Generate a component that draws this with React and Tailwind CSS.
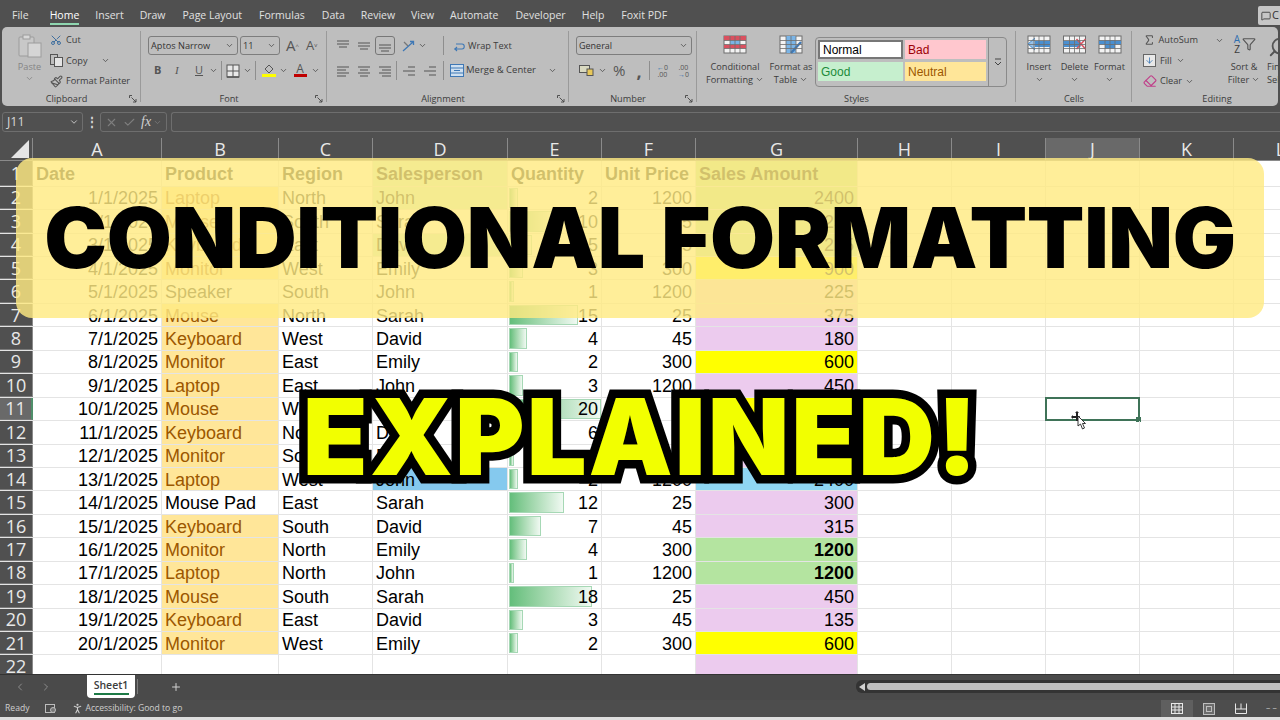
import { ChevronDown, ChevronLeft, ChevronRight, Plus, Scissors, Paintbrush, Sigma, Funnel, Search, X, Check, Eraser, PersonStanding, MessageSquare, ArrowDown } from 'lucide-react'

const COLS = ['A', 'B', 'C', 'D', 'E', 'F', 'G', 'H', 'I', 'J', 'K', 'L']
const WIDTHS = ['w-[129px]', 'w-[117px]', 'w-[94px]', 'w-[135px]', 'w-[94px]', 'w-[94px]', 'w-[162px]', 'w-[94px]', 'w-[94px]', 'w-[94px]', 'w-[94px]', 'w-[94px]']

const ROWS = [
  ['1/1/2025', 'Laptop', 'North', 'John', 2, 1200, 2400],
  ['2/1/2025', 'Mouse', 'South', 'Sarah', 10, 25, 250],
  ['3/1/2025', 'Keyboard', 'East', 'David', 5, 45, 225],
  ['4/1/2025', 'Monitor', 'West', 'Emily', 3, 300, 900],
  ['5/1/2025', 'Speaker', 'South', 'John', 1, 1200, 225],
  ['6/1/2025', 'Mouse', 'North', 'Sarah', 15, 25, 375],
  ['7/1/2025', 'Keyboard', 'West', 'David', 4, 45, 180],
  ['8/1/2025', 'Monitor', 'East', 'Emily', 2, 300, 600],
  ['9/1/2025', 'Laptop', 'East', 'John', 3, 1200, 450],
  ['10/1/2025', 'Mouse', 'West', 'Sarah', 20, 25, 500],
  ['11/1/2025', 'Keyboard', 'North', 'David', 6, 45, 270],
  ['12/1/2025', 'Monitor', 'South', 'Emily', 1, 300, 300],
  ['13/1/2025', 'Laptop', 'West', 'John', 2, 1200, 2400],
  ['14/1/2025', 'Mouse Pad', 'East', 'Sarah', 12, 25, 300],
  ['15/1/2025', 'Keyboard', 'South', 'David', 7, 45, 315],
  ['16/1/2025', 'Monitor', 'North', 'Emily', 4, 300, 1200],
  ['17/1/2025', 'Laptop', 'North', 'John', 1, 1200, 1200],
  ['18/1/2025', 'Mouse', 'South', 'Sarah', 18, 25, 450],
  ['19/1/2025', 'Keyboard', 'East', 'David', 3, 45, 135],
  ['20/1/2025', 'Monitor', 'West', 'Emily', 2, 300, 600],
]

const GREEN_SALES = [2, 3, 4, 17, 18]
const YELLOW_SALES = [5, 9, 11, 21]
const GREEN_PEOPLE = [2, 4]

function salesFill(n) {
  if (n === 14) return 'bg-[#8fd6f3]'
  if (YELLOW_SALES.includes(n)) return 'bg-[#ffff00]'
  if (GREEN_SALES.includes(n)) return 'bg-[#b4e4a0]'
  return 'bg-[#eccbee]'
}

function Chev({ className = '' }) {
  return <ChevronDown size={9} strokeWidth={2} className={`shrink-0 text-[#444] ${className}`} />
}

function Launcher() {
  return (
    <svg width="8" height="8" viewBox="0 0 8 8" className="absolute right-[4px] bottom-[3px] text-[#444]" fill="none" stroke="currentColor">
      <path d="M0.5 3V0.5H3M2.5 2.5L7 7M7 4V7H4" strokeWidth="0.9" />
    </svg>
  )
}

function Group({ w, label, launcher, children }) {
  return (
    <div className={`${w} shrink-0 flex flex-col relative`}>
      <div className="flex-1 min-h-0 flex">{children}</div>
      <div className={`h-[15px] text-center text-[9.2px] leading-[15px] text-[#3c3c3c] ${launcher ? 'pr-[10px]' : ''}`}>{label}</div>
      {launcher && <Launcher />}
      <div className="absolute right-0 top-[4px] bottom-[4px] w-px bg-[#9a9a9a]" />
    </div>
  )
}

function Sep({ className = '' }) {
  return <div className={`w-px h-[19px] bg-[#8e8e8e] shrink-0 ${className}`} />
}

function Select({ w, text, small }) {
  return (
    <div className={`${w} h-[19px] border border-[#7d7d7d] rounded-[3px] flex items-center justify-between pl-[2px] pr-[3px] shrink-0 ${small ? 'text-[9px]' : 'text-[9.2px]'} text-[#333]`}>
      <span>{text}</span>
      <Chev />
    </div>
  )
}

function Lines({ pattern, className = '' }) {
  return (
    <svg width="14" height="12" viewBox="0 0 14 12" className={`shrink-0 ${className}`} stroke="#555" strokeWidth="1.2">
      {pattern.map(([y, a, b], i) => <line key={i} x1={a} x2={b} y1={y} y2={y} />)}
    </svg>
  )
}

function GridIcon({ children, w = 24, h = 19 }) {
  return (
    <svg width={w} height={h} viewBox="0 0 24 19" className="shrink-0">
      <rect x="1" y="1" width="22" height="17" fill="#f3f3f3" stroke="#6d6d6d" />
      {children}
      <path d="M1 5.5H23M1 9.5H23M1 13.5H23M7 1V18M12 1V18M17 1V18" stroke="#6d6d6d" strokeWidth="0.8" fill="none" />
    </svg>
  )
}

function BigButton({ w, lines, icon, chevBelow }) {
  return (
    <div className={`${w} shrink-0 flex flex-col items-center pt-[8px] text-[9.2px] leading-[13px] text-[#3c3c3c]`}>
      <div className="h-[25px] flex items-start justify-center">{icon}</div>
      {lines.map((l, i) => (
        <div key={l} className="flex items-center gap-[2px] whitespace-nowrap">
          {l}
          {!chevBelow && i === lines.length - 1 && <Chev />}
        </div>
      ))}
      {chevBelow && <Chev className="mt-[2px]" />}
    </div>
  )
}

function StyleCell({ text, className }) {
  return <div className={`h-[19px] flex items-center pl-[3px] text-[12px] [font-family:'Liberation_Sans',Arial,sans-serif] ${className}`}>{text}</div>
}

function Ribbon() {
  return (
    <div className="mx-[2px] h-[79px] shrink-0 bg-[#bebebe] rounded-[5px] flex text-[#3c3c3c] overflow-hidden">
      <Group w="w-[139px]" label="Clipboard" launcher>
        <div className="w-[45px] flex flex-col items-center pl-[10px] pt-[7px] shrink-0">
          <svg width="24" height="24" viewBox="0 0 24 24" fill="none">
            <rect x="1" y="3" width="15" height="19" rx="1" fill="#c8c8c8" stroke="#9c9c9c" />
            <rect x="5" y="1" width="7" height="4" fill="#d8d8d8" stroke="#9c9c9c" />
            <rect x="10" y="9" width="13" height="14" fill="#d5d5d5" stroke="#9c9c9c" />
          </svg>
          <span className="text-[9.2px] leading-[13px] mt-[2px] text-[#858585]">Paste</span>
          <Chev className="opacity-50 mt-[1px]" />
        </div>
        <div className="flex flex-col pl-[3px] pt-[6px] text-[9.2px] gap-[6.5px]">
          <div className="h-[14px] flex items-center gap-[4px]"><Scissors size={12} className="text-[#3f6f9f] -rotate-90" />Cut</div>
          <div className="h-[14px] flex items-center gap-[3px]">
            <svg width="13" height="13" viewBox="0 0 13 13" fill="none" stroke="#555"><rect x="0.5" y="0.5" width="7" height="10" /><rect x="4.5" y="3.5" width="8" height="9" fill="#e4e4e4" /></svg>
            Copy<Chev className="ml-[10px]" />
          </div>
          <div className="h-[14px] flex items-center gap-[3px] whitespace-nowrap"><Paintbrush size={13} className="text-[#555]" />Format Painter</div>
        </div>
      </Group>

      <Group w="w-[186px]" label="Font" launcher>
        <div className="flex flex-col pl-[7px] pt-[9px] gap-[6px]">
          <div className="flex items-center gap-[2px]">
            <Select w="w-[90px]" text="Aptos Narrow" />
            <Select w="w-[40px]" text="11" />
            <span className="ml-[4px] text-[15px] leading-none text-[#555]">A<sup className="text-[6px]">^</sup></span>
            <span className="ml-[5px] text-[13px] leading-none text-[#555]">A<sup className="text-[6px]">v</sup></span>
          </div>
          <div className="flex items-center h-[19px] text-[11px] text-[#555]">
            <span className="ml-[6px] w-[21px] font-bold">B</span>
            <span className="w-[20px] italic [font-family:'Liberation_Serif',serif]">I</span>
            <span className="w-[14px] underline">U</span>
            <Chev className="mr-[3px]" />
            <Sep className="mr-[4px]" />
            <svg width="14" height="14" viewBox="0 0 14 14" fill="#e8e8e8" stroke="#555"><rect x="1" y="1" width="12" height="12" /><path d="M7 1V13M1 7H13" /><path d="M1 13H13" strokeWidth="1.6" /></svg>
            <Chev className="ml-[3px] mr-[3px]" />
            <Sep className="mr-[5px]" />
            <div className="w-[15px] flex flex-col items-center">
              <svg width="12" height="10" viewBox="0 0 12 10" fill="none" stroke="#555"><path d="M2 5L6 1L10 5L6 9Z" /></svg>
              <div className="w-[14px] h-[3px] bg-[#ffff00]" />
            </div>
            <Chev className="ml-[3px] mr-[5px]" />
            <div className="w-[14px] flex flex-col items-center leading-[10px] text-[12px]">A<div className="w-[13px] h-[3px] bg-[#c00000]" /></div>
            <Chev className="ml-[4px]" />
          </div>
        </div>
      </Group>

      <Group w="w-[242px]" label="Alignment" launcher>
        <div className="flex flex-col pt-[9px] gap-[6px] pl-[9px]">
          <div className="flex items-center h-[19px]">
            <Lines pattern={[[1, 1, 13], [4, 1, 13], [7, 3, 11]]} className="mr-[7px]" />
            <Lines pattern={[[3, 1, 13], [6, 1, 13], [9, 3, 11]]} className="mr-[4px]" />
            <div className="w-[20px] h-[19px] border border-[#777] rounded-[3px] flex items-center justify-center mr-[1px]">
              <Lines pattern={[[5, 1, 13], [8, 1, 13], [11, 3, 11]]} />
            </div>
            <svg width="15" height="14" viewBox="0 0 15 14" className="ml-[5px]" fill="none" stroke="#3f78b5" strokeWidth="1.3"><path d="M2 12L12 3M9 2.5H12.5V6" /><path d="M3 3L7 7" stroke="#777" /></svg>
            <Chev className="ml-[2px]" />
            <Sep className="ml-[16px] mr-[8px]" />
            <svg width="14" height="14" viewBox="0 0 14 14" fill="none" stroke="#3f78b5" strokeWidth="1.1"><path d="M2 10H10C13 10 13 5 10 5H4M5 12L3 10L5 8" /></svg>
            <span className="ml-[2px] text-[9.2px]">Wrap Text</span>
          </div>
          <div className="flex items-center h-[19px]">
            <Lines pattern={[[2, 1, 13], [5, 1, 10], [8, 1, 13], [11, 1, 10]]} className="mr-[7px]" />
            <Lines pattern={[[2, 1, 13], [5, 3, 11], [8, 1, 13], [11, 3, 11]]} className="mr-[7px]" />
            <Lines pattern={[[2, 1, 13], [5, 4, 13], [8, 1, 13], [11, 4, 13]]} className="mr-[4px]" />
            <Sep className="mr-[5px]" />
            <Lines pattern={[[2, 6, 13], [6, 1, 13], [10, 6, 13]]} className="mr-[7px]" />
            <Lines pattern={[[2, 6, 13], [6, 1, 13], [10, 6, 13]]} />
            <Sep className="ml-[6px] mr-[6px]" />
            <svg width="14" height="13" viewBox="0 0 14 13" fill="#cfe0f0" stroke="#3f78b5"><rect x="0.5" y="0.5" width="13" height="12" /><path d="M0.5 4H13.5M0.5 9H13.5M4 6.5H10" /></svg>
            <span className="ml-[2px] text-[9.5px] whitespace-nowrap">Merge &amp; Center</span>
            <Chev className="ml-[12px]" />
          </div>
        </div>
      </Group>

      <Group w="w-[128px]" label="Number" launcher>
        <div className="flex flex-col pl-[7px] pt-[9px] gap-[6px]">
          <Select w="w-[116px]" text="General" small />
          <div className="flex items-center h-[19px] text-[#555]">
            <svg width="15" height="11" viewBox="0 0 15 11" className="ml-[3px]" fill="#d9d9c0" stroke="#555"><rect x="0.5" y="0.5" width="10" height="7" /><rect x="8" y="4" width="6" height="6.5" fill="#e8c85a" /></svg>
            <Chev className="ml-[4px]" />
            <span className="ml-[6px] text-[15px] leading-none">%</span>
            <span className="ml-[11px] w-[6px] text-[18px] leading-[10px] font-bold">,</span>
            <Sep className="ml-[7px] mr-[5px]" />
            <span className="w-[14px] text-[7px] leading-[7px] text-center"><span className="text-[#2f6fb0]">←</span>0<br />.00</span>
            <span className="ml-[7px] w-[14px] text-[7px] leading-[7px] text-center">.00<br /><span className="text-[#2f6fb0]">→</span>0</span>
          </div>
        </div>
      </Group>

      <Group w="w-[319px]" label="Styles">
        <BigButton w="w-[62px] ml-[7px]" lines={['Conditional', 'Formatting']} icon={
          <GridIcon>
            <rect x="1" y="1" width="22" height="4.5" fill="#d9505f" />
            <rect x="1" y="9.5" width="22" height="4" fill="#d9505f" />
            <rect x="7" y="5.5" width="10" height="4" fill="#7ab4e6" />
          </GridIcon>
        } />
        <BigButton w="w-[50px]" lines={['Format as', 'Table']} icon={
          <GridIcon>
            <rect x="7" y="1" width="10" height="17" fill="#7ab4e6" />
            <path d="M12 18L22 7" stroke="#3f78b5" strokeWidth="2.4" />
          </GridIcon>
        } />
        <div className="ml-[-1px] mt-[10px] w-[192px] h-[50px] border border-[#8a8a8a] rounded-[4px] flex p-[2px] shrink-0">
          <div className="w-[85px] flex flex-col gap-[3px]">
            <StyleCell text="Normal" className="bg-white border-2 border-[#777] text-black" />
            <StyleCell text="Good" className="bg-[#c6efce] text-[#1c8a3a]" />
          </div>
          <div className="w-[81px] ml-[2px] flex flex-col gap-[3px]">
            <StyleCell text="Bad" className="bg-[#ffc7ce] text-[#9c0006]" />
            <StyleCell text="Neutral" className="bg-[#ffe699] text-[#9c5700]" />
          </div>
          <div className="ml-[2px] -my-[2px] -mr-[2px] flex-1 border-l border-[#8a8a8a] flex items-center justify-center text-[9px]">
            <svg width="8" height="8" viewBox="0 0 8 8" fill="none" stroke="#444"><path d="M1 1H7M1 4L4 7L7 4" /></svg>
          </div>
        </div>
      </Group>

      <Group w="w-[116px]" label="Cells">
        <BigButton w="w-[36px] ml-[5px]" chevBelow lines={['Insert']} icon={
          <GridIcon w={26}>
            <rect x="4" y="6" width="19" height="6" fill="#4a8fd0" />
            <path d="M8 3L1 9L8 15" fill="#9ac3e8" stroke="#4a8fd0" />
          </GridIcon>
        } />
        <BigButton w="w-[35px]" chevBelow lines={['Delete']} icon={
          <GridIcon w={25}>
            <rect x="1" y="6" width="17" height="6" fill="#4a8fd0" />
            <path d="M14 4L23 14M23 4L14 14" stroke="#d9505f" strokeWidth="1.5" />
          </GridIcon>
        } />
        <BigButton w="w-[35px]" chevBelow lines={['Format']} icon={
          <GridIcon w={24}>
            <rect x="7" y="5.5" width="10" height="8" fill="#4a8fd0" />
            <rect x="1" y="5.5" width="22" height="4" fill="#4a8fd0" />
          </GridIcon>
        } />
      </Group>

      <div className="flex-1 flex flex-col relative min-w-0">
        <div className="flex-1 min-h-0 flex overflow-hidden">
          <div className="w-[92px] shrink-0 flex flex-col pl-[11px] pt-[6px] gap-[6.5px] text-[9.2px]">
            <div className="h-[14px] flex items-center gap-[3px]"><Sigma size={14} className="text-[#555]" />AutoSum<Chev className="ml-[14px]" /></div>
            <div className="h-[14px] flex items-center gap-[4px]">
              <div className="w-[13px] h-[13px] border border-[#666] bg-[#e8e8e8] flex items-center justify-center"><ArrowDown size={9} className="text-[#2f6fb0]" /></div>
              Fill<Chev />
            </div>
            <div className="h-[14px] flex items-center gap-[3px]"><Eraser size={14} className="text-[#c0408a]" />Clear<Chev /></div>
          </div>
          <div className="w-[40px] shrink-0 flex flex-col items-center pt-[7px] text-[9.2px] leading-[13px]">
            <div className="h-[26px] flex items-start">
              <span className="text-[10px] leading-[10px] text-center w-[10px]"><span className="text-[#2f6fb0]">A</span><br />Z</span>
              <Funnel size={14} className="mt-[3px] text-[#555]" />
            </div>
            <div>Sort &amp;</div>
            <div className="flex items-center gap-[2px]">Filter<Chev /></div>
          </div>
          <div className="w-[40px] shrink-0 flex flex-col pl-[3px] pt-[7px] text-[9.2px] leading-[13px] whitespace-nowrap">
            <Search size={22} className="h-[26px] -scale-x-100 ml-[1px] text-[#555]" />
            <div>Find &amp;</div>
            <div>Select</div>
          </div>
        </div>
        <div className="h-[15px] pl-[24px] w-[146px] text-center text-[9.2px] leading-[15px]">Editing</div>
      </div>
    </div>
  )
}

function FormulaBar() {
  return (
    <div className="mt-[6px] h-[20px] shrink-0 flex items-stretch text-[#d8d8d8]">
      <div className="ml-[2px] w-[81px] border border-[#6e6e6e] rounded-[3px] flex items-center justify-between pl-[4px] pr-[3px] text-[12.5px]">
        J11<ChevronDown size={10} />
      </div>
      <div className="w-[17px] flex items-center justify-center text-[12px] leading-none font-bold">⋮</div>
      <div className="w-[67px] border border-[#6e6e6e] rounded-[3px] flex items-center pl-[4px] gap-[5px] text-[#7e7e7e]">
        <X size={13} />
        <Check size={13} />
        <span className="italic text-[14px] leading-none text-[#cfcfcf] [font-family:'Liberation_Serif',serif]">fx</span>
        <ChevronDown size={9} className="-ml-[3px]" />
      </div>
      <div className="ml-[4px] flex-1 border border-[#6e6e6e] border-r-0 rounded-l-[3px]" />
    </div>
  )
}

function ColumnHeaders() {
  return (
    <div className="mt-[6px] h-[23px] shrink-0 flex text-[18px] leading-[23px] text-[#e8e8e8] [font-family:'Open_Sans',sans-serif] border-b border-[#8a8a8a]">
      <div className="w-[33px] shrink-0 flex items-end justify-end pr-[3px] pb-[2px] border-r border-[#8a8a8a]">
        <svg width="18" height="18" viewBox="0 0 18 18"><path d="M18 0V18H0Z" fill="#e4e4e4" /></svg>
      </div>
      {COLS.map((c, i) => (
        <div key={c} className={`${WIDTHS[i]} shrink-0 text-center border-r border-[#8a8a8a] ${c === 'J' ? 'bg-[#696969]' : ''}`}>{c}</div>
      ))}
    </div>
  )
}

function DataBar({ value }) {
  return (
    <div
      className="absolute left-[1px] top-[1px] bottom-[1px] border border-[#a6d8b5] bg-gradient-to-r from-[#63be7b] to-[#f0f9f2]"
      style={{ width: value * 4.6 }}
    />
  )
}

function Selection() {
  return (
    <>
      <div className="absolute -left-[1px] -top-[1px] -right-[1px] -bottom-[1px] border-2 border-[#3f7358]" />
      <div className="absolute -right-[2px] -bottom-[2px] w-[5px] h-[5px] bg-[#3f7358]" />
      <svg width="18" height="20" viewBox="0 0 18 20" className="absolute left-[25px] top-[13px]">
        <path d="M6 0L8 2H7V5H8.500L9 6V10H5V7H2V8L0 6L2 4V5H5V2H4Z" fill="#222" />
        <path d="M7 5L7 15L9.500 13L11.500 18L13.500 17L11.500 12.500L14.500 12.500Z" fill="#fff" stroke="#222" strokeWidth="0.9" />
      </svg>
    </>
  )
}

function GridRow({ n, cells, header }) {
  const base = 'shrink-0 h-full flex items-center border-r border-[#e4e4e4] px-[3px] pt-[1px] relative whitespace-nowrap'
  const active = n === 11
  return (
    <div className={`flex shrink-0 border-b border-[#e4e4e4] ${n === 1 ? 'h-[25.7px]' : 'h-[23.45px]'}`}>
      <div className={`w-[33px] shrink-0 h-full flex items-center justify-center text-[18px] text-[#e8e8e8] [font-family:'Open_Sans',sans-serif] border-b border-[#7a7a7a] -mb-px ${active ? 'bg-[#696969] border-r-2 border-r-[#4f8f6a]' : 'bg-[#505050] border-r border-r-[#8a8a8a]'}`}>{n}</div>
      {COLS.map((c, i) => {
        const v = cells ? cells[i] : undefined
        if (header) {
          return <div key={c} className={`${WIDTHS[i]} ${base} font-bold overflow-hidden ${c === 'D' ? 'bg-[#c6efce]' : ''} ${c === 'G' ? 'bg-[#b4e4a0]' : ''}`}>{v}</div>
        }
        let cls = ''
        let content = <span className="relative">{v}</span>
        if (c === 'A' || c === 'E' || c === 'F' || c === 'G') cls = 'justify-end'
        if (c === 'B' && v && v !== 'Mouse Pad' && v !== 'Speaker') cls = 'bg-[#ffe699] text-[#9c5700]'
        if (c === 'D' && GREEN_PEOPLE.includes(n)) cls = 'bg-[#c6efce]'
        if (c === 'D' && n === 14) cls = 'bg-[#85c9ee]'
        if (c === 'G' && n !== 1) cls = `justify-end ${salesFill(n)}`
        if (c === 'G' && v === 1200) content = <span className="font-bold">{v}</span>
        return (
          <div key={c} className={`${WIDTHS[i]} ${base} ${cls}`}>
            {c === 'E' && v !== undefined && <DataBar value={v} />}
            {content}
            {c === 'J' && active && <Selection />}
          </div>
        )
      })}
    </div>
  )
}

function SheetTabs() {
  return (
    <div className="h-[26px] shrink-0 flex border-t border-[#333] bg-[#4a4a4a] text-[#b0b0b0] relative">
      <ChevronLeft size={12} className="ml-[14px] mt-[6px] text-[#8c8c8c]" />
      <ChevronRight size={12} className="ml-[14px] mt-[6px] text-[#8c8c8c]" />
      <div className="ml-[35px] w-[48px] h-[23px] bg-white rounded-b-[4px] flex flex-col items-center pt-[4px] text-[10.5px] leading-[13px] font-semibold text-[#3d3d3d] [font-family:'Open_Sans',sans-serif]">
        Sheet1
        <div className="w-[35px] h-[1px] mt-[1px] border-b-2 border-[#1d7a46]" />
      </div>
      <div className="ml-[2px] w-px h-[15px] mt-[4px] bg-[#7d7d7d]" />
      <Plus size={12} className="ml-[32px] mt-[6px] text-[#d0d0d0]" />
      <div className="ml-[674px] mt-[5px] h-[13px] flex-1 bg-[#333] rounded-l-[6px] flex items-center pl-[3px]">
        <svg width="6" height="8" viewBox="0 0 6 8"><path d="M6 0V8L0 4Z" fill="#d0d0d0" /></svg>
        <div className="ml-[2px] flex-1 h-[7px] bg-[#bfbfbf] rounded-l-[4px]" />
      </div>
    </div>
  )
}

function StatusBar() {
  return (
    <div className="h-[17px] shrink-0 flex items-center bg-[#4d4d4d] text-[8.6px] text-[#cfcfcf] [font-family:'Open_Sans',sans-serif]">
      <span className="ml-[5px]">Ready</span>
      <svg width="12" height="11" viewBox="0 0 12 11" className="ml-[16px]" fill="none" stroke="#bdbdbd"><rect x="0.500" y="1.500" width="9" height="8" /><circle cx="8" cy="7" r="2.500" fill="#777" /></svg>
      <PersonStanding size={13} className="ml-[14px] text-[#cfcfcf]" />
      <span className="ml-[1px]">Accessibility: Good to go</span>
      <div className="ml-auto w-[32px] h-full bg-[#5f5f5f] flex items-center justify-center">
        <svg width="12" height="11" viewBox="0 0 12 11" fill="none" stroke="#e8e8e8"><rect x="0.500" y="0.500" width="11" height="10" /><path d="M4 0.500V10.500M8 0.500V10.500M0.500 4H11.500M0.500 7H11.500" /></svg>
      </div>
      <div className="w-[32px] flex justify-center">
        <svg width="12" height="12" viewBox="0 0 12 12" fill="#6b6b6b" stroke="#bdbdbd"><rect x="0.500" y="0.500" width="11" height="11" /><rect x="3.500" y="3.500" width="5" height="5" /></svg>
      </div>
      <div className="w-[32px] flex justify-center">
        <svg width="12" height="11" viewBox="0 0 12 11" fill="none" stroke="#e8e8e8"><path d="M0.500 0.500V10.500H11.500V0.500M0.500 6H11.500M6 0.500V6" /></svg>
      </div>
      <div className="w-[23px] pl-[9px] text-[#bdbdbd]">– –</div>
    </div>
  )
}

export default function App() {
  return (
    <div className="w-[1280px] h-[720px] overflow-hidden relative flex flex-col bg-[#505050] [font-family:'Open_Sans',sans-serif]">
      {/* Ribbon tabs */}
      <div className="h-[27px] shrink-0 flex items-center pt-[5px] text-[10.5px] text-[#e0e0e0] relative">
        <span className="ml-[12px]">File</span>
        <span className="ml-[21px] relative text-white">Home<span className="absolute left-0 right-0 -bottom-[1px] h-[2px] bg-[#8fd6b0]" /></span>
        <span className="ml-[16px]">Insert</span>
        <span className="ml-[16px]">Draw</span>
        <span className="ml-[17px]">Page Layout</span>
        <span className="ml-[17px]">Formulas</span>
        <span className="ml-[17px]">Data</span>
        <span className="ml-[16px]">Review</span>
        <span className="ml-[16px]">View</span>
        <span className="ml-[16px]">Automate</span>
        <span className="ml-[17px]">Developer</span>
        <span className="ml-[16px]">Help</span>
        <span className="ml-[17px]">Foxit PDF</span>
        <div className="absolute left-[1258px] top-[6px] w-[30px] h-[19px] bg-[#c6c6c6] rounded-[2px] flex items-center pl-[3px] gap-[1px] text-[#333] text-[11px]">
          <MessageSquare size={10} />C
        </div>
      </div>

      <Ribbon />
      <FormulaBar />
      <ColumnHeaders />

      {/* Sheet */}
      <div className="flex-1 min-h-0 overflow-hidden bg-white text-black text-[18px] leading-none [font-family:'Liberation_Sans',Arial,sans-serif]">
        <GridRow n={1} header cells={['Date', 'Product', 'Region', 'Salesperson', 'Quantity', 'Unit Price', 'Sales Amount']} />
        {ROWS.map((r, i) => <GridRow key={i} n={i + 2} cells={r} />)}
        <GridRow n={22} />
      </div>

      <SheetTabs />
      <StatusBar />
      <div className="h-[3px] shrink-0 bg-[#dedede]" />

      {/* Thumbnail title overlays */}
      <div className="absolute left-[16px] top-[158px] w-[1248px] h-[160px] rounded-[16px] bg-[rgba(255,234,130,0.82)] flex items-center justify-center">
        <span className="text-[84px] leading-none font-black text-black whitespace-nowrap tracking-[-0.3px] [font-family:'Inter',sans-serif]">CONDITIONAL FORMATTING</span>
      </div>
      <div className="absolute left-[300px] top-[382px] w-[682px] h-[110px] flex items-center justify-center">
        <span className="text-[106px] leading-none font-black text-[#f2ff00] whitespace-nowrap [-webkit-text-stroke:17px_black] [paint-order:stroke_fill] [stroke-linejoin:round] tracking-[2px] [font-family:'Inter',sans-serif]">EXPLAINED!</span>
      </div>
    </div>
  )
}
